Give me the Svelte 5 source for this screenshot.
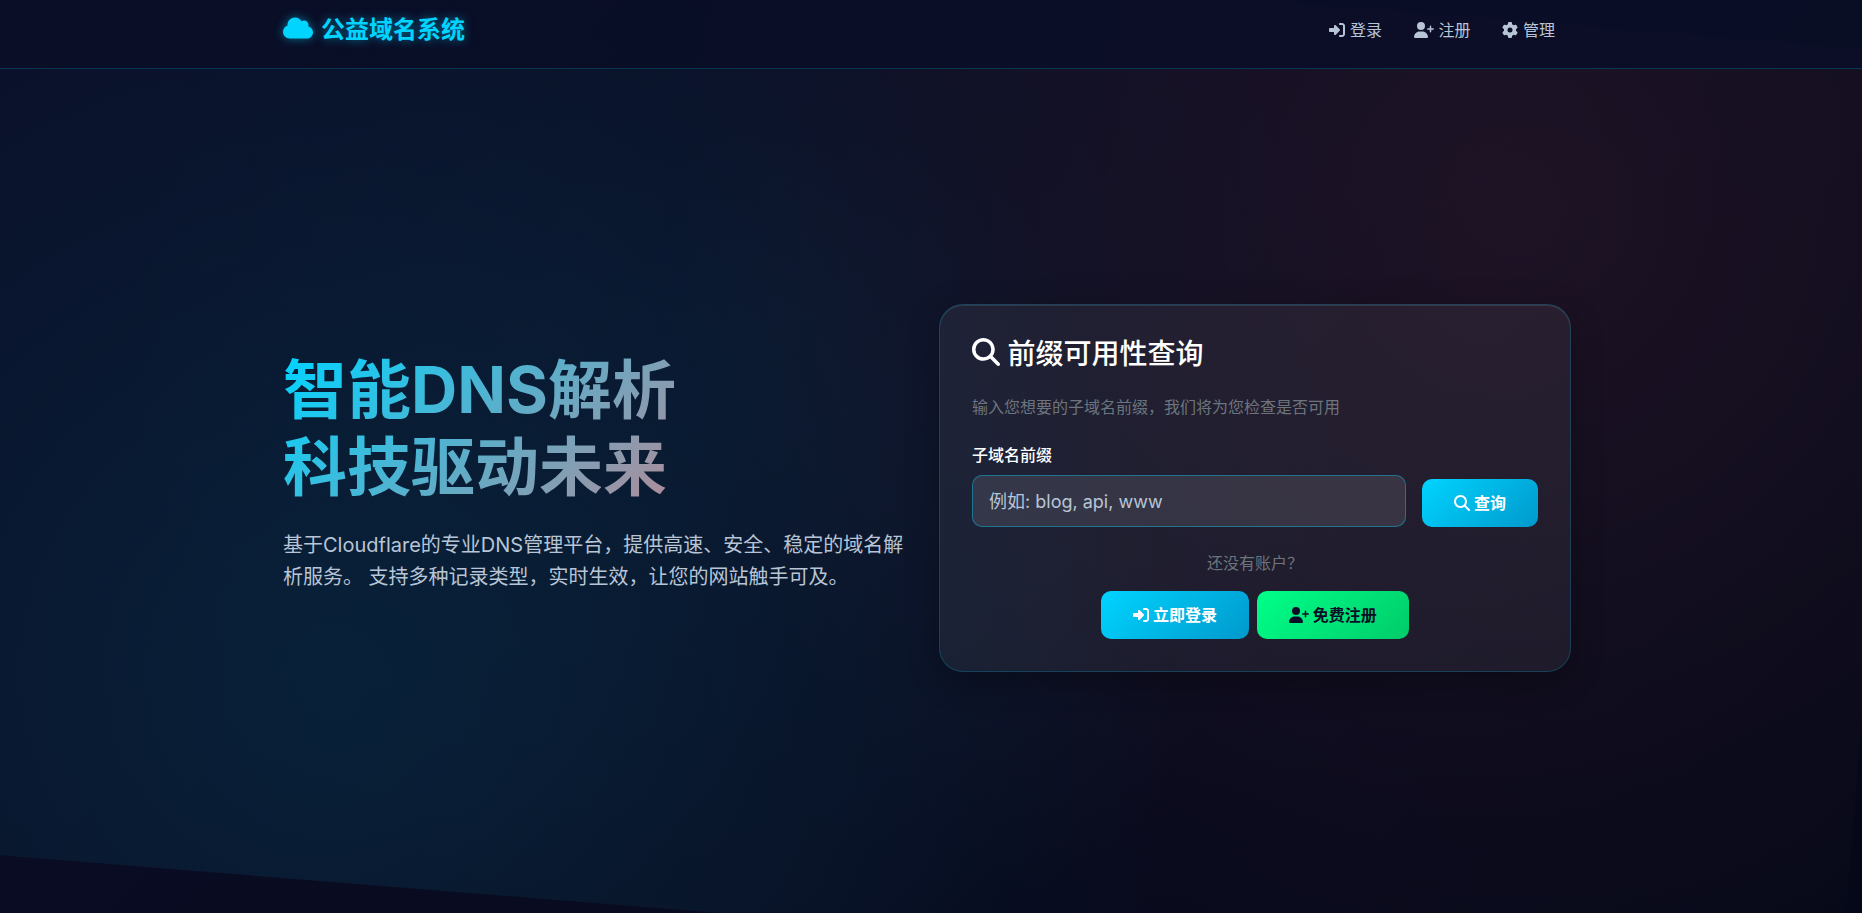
<script>
    let prefix = '';

    const navLinks = [
        { icon: 'login', label: '登录', href: '#login' },
        { icon: 'userPlus', label: '注册', href: '#register' },
        { icon: 'gear', label: '管理', href: '#admin' }
    ];

    const icons = {
        cloud: { w: 640, d: 'M0 336c0 79.5 64.5 144 144 144H512c70.7 0 128-57.3 128-128c0-61.9-44-113.6-102.4-125.4c4.1-10.7 6.4-22.4 6.4-34.6c0-53-43-96-96-96c-19.7 0-38.1 6-53.3 16.2C367 64.2 315.3 32 256 32C167.6 32 96 103.6 96 192c0 2.7 .1 5.4 .2 8.1C40.2 219.8 0 273.2 0 336z' },
        login: { w: 512, d: 'M217.9 105.9L340.7 228.7c7.2 7.2 11.3 17.1 11.3 27.3s-4.1 20.1-11.3 27.3L217.9 406.1c-6.4 6.4-15 9.9-24 9.9c-18.7 0-33.9-15.2-33.9-33.9l0-62.1L32 320c-17.7 0-32-14.3-32-32l0-64c0-17.7 14.3-32 32-32l128 0 0-62.1c0-18.7 15.2-33.9 33.9-33.9c9 0 17.6 3.6 24 9.9zM352 416l64 0c17.7 0 32-14.3 32-32l0-256c0-17.7-14.3-32-32-32l-64 0c-17.7 0-32-14.3-32-32s14.3-32 32-32l64 0c53 0 96 43 96 96l0 256c0 53-43 96-96 96l-64 0c-17.7 0-32-14.3-32-32s14.3-32 32-32z' },
        userPlus: { w: 640, d: 'M96 128a128 128 0 1 1 256 0A128 128 0 1 1 96 128zM0 482.3C0 383.8 79.8 304 178.3 304h91.4C368.2 304 448 383.8 448 482.3c0 16.4-13.3 29.7-29.7 29.7H29.7C13.3 512 0 498.7 0 482.3zM504 312V248H440c-13.3 0-24-10.7-24-24s10.7-24 24-24h64V136c0-13.3 10.7-24 24-24s24 10.7 24 24v64h64c13.3 0 24 10.7 24 24s-10.7 24-24 24H552v64c0 13.3-10.7 24-24 24s-24-10.7-24-24z' },
        gear: { w: 512, d: 'M495.9 166.6c3.2 8.7 .5 18.4-6.4 24.6l-43.3 39.4c1.1 8.3 1.7 16.8 1.7 25.4s-.6 17.1-1.7 25.4l43.3 39.4c6.9 6.2 9.6 15.9 6.4 24.6c-4.4 11.9-9.7 23.3-15.8 34.3l-4.7 8.1c-6.6 11-14 21.4-22.1 31.2c-5.9 7.2-15.7 9.6-24.5 6.8l-55.7-17.7c-13.4 10.3-28.2 18.9-44 25.4l-12.5 57.1c-2 9.1-9 16.3-18.2 17.8c-13.8 2.3-28 3.5-42.5 3.5s-28.7-1.2-42.5-3.5c-9.2-1.5-16.2-8.7-18.2-17.8l-12.5-57.1c-15.8-6.5-30.6-15.1-44-25.4L83.1 425.9c-8.8 2.8-18.6 .3-24.5-6.8c-8.1-9.8-15.5-20.2-22.1-31.2l-4.7-8.1c-6.1-11-11.4-22.4-15.8-34.3c-3.2-8.7-.5-18.4 6.4-24.6l43.3-39.4C64.6 273.1 64 264.6 64 256s.6-17.1 1.7-25.4L22.4 191.2c-6.9-6.2-9.6-15.9-6.4-24.6c4.4-11.9 9.7-23.3 15.8-34.3l4.7-8.1c6.6-11 14-21.4 22.1-31.2c5.9-7.2 15.7-9.6 24.5-6.8l55.7 17.7c13.4-10.3 28.2-18.9 44-25.4l12.5-57.1c2-9.1 9-16.3 18.2-17.8C227.3 1.2 241.5 0 256 0s28.7 1.2 42.5 3.5c9.2 1.5 16.2 8.7 18.2 17.8l12.5 57.1c15.8 6.5 30.6 15.1 44 25.4l55.7-17.7c8.8-2.8 18.6-.3 24.5 6.8c8.1 9.8 15.5 20.2 22.1 31.2l4.7 8.1c6.1 11 11.4 22.4 15.8 34.3zM256 336a80 80 0 1 0 0-160 80 80 0 1 0 0 160z' },
        search: { w: 512, d: 'M416 208c0 45.9-14.9 88.3-40 122.7L502.6 457.4c12.5 12.5 12.5 32.8 0 45.3s-32.8 12.5-45.3 0L330.7 376c-34.4 25.2-76.8 40-122.7 40C93.1 416 0 322.9 0 208S93.1 0 208 0S416 93.1 416 208zM208 352a144 144 0 1 0 0-288 144 144 0 1 0 0 288z' }
    };
</script>

{#snippet icon(name)}
    <svg class="icon" viewBox={`0 0 ${icons[name].w} 512`} style:width={`${icons[name].w / 512}em`} aria-hidden="true">
        <path d={icons[name].d} />
    </svg>
{/snippet}

<div class="page">
    <div class="glow"></div>

    <nav class="navbar">
        <div class="container nav-inner">
            <a class="brand" href="#home">{@render icon('cloud')}公益域名系统</a>
            <ul class="nav-links">
                {#each navLinks as link}
                    <li><a href={link.href}>{@render icon(link.icon)} {link.label}</a></li>
                {/each}
            </ul>
        </div>
    </nav>

    <main class="container hero">
        <section class="intro">
            <h1>智能DNS解析<br />科技驱动未来</h1>
            <p>
                基于Cloudflare的专业DNS管理平台，提供高速、安全、稳定的域名解析服务。
                支持多种记录类型，实时生效，让您的网站触手可及。
            </p>
        </section>

        <section class="card">
            <h3>{@render icon('search')} 前缀可用性查询</h3>
            <p class="muted">输入您想要的子域名前缀，我们将为您检查是否可用</p>

            <form class="query" on:submit|preventDefault={() => {}}>
                <div class="field">
                    <label for="prefix">子域名前缀</label>
                    <input id="prefix" type="text" placeholder="例如: blog, api, www" bind:value={prefix} />
                </div>
                <button class="btn primary" type="submit">{@render icon('search')} 查询</button>
            </form>

            <div class="account">
                <p class="muted">还没有账户？</p>
                <div class="account-links">
                    <a class="btn primary" href="#login">{@render icon('login')} 立即登录</a>
                    <a class="btn success" href="#register">{@render icon('userPlus')} 免费注册</a>
                </div>
            </div>
        </section>
    </main>
</div>

<style>
    :global(body) {
        background-color: #0a0e27;
    }

    .page {
        --primary: #00d4ff;
        --light: #b8c5d6;
        position: relative;
        display: flex;
        flex-direction: column;
        min-height: 100vh;
        overflow: hidden;
        color: #fff;
        font-family: Inter, "Noto Sans CJK SC", sans-serif;
        font-size: 16px;
        line-height: 24px;
        background: linear-gradient(135deg, #0a0e27 0%, #090b20 50%, #050818 100%);
    }

    .page *,
    .glow {
        box-sizing: border-box;
    }

    .glow {
        position: absolute;
        inset: -40px 0 0 -50px;
        background:
            radial-gradient(circle at 20% 80%, rgba(0, 212, 255, 0.1) 0%, transparent 50%),
            radial-gradient(circle at 80% 20%, rgba(255, 107, 107, 0.09) 0%, transparent 50%),
            radial-gradient(circle at 40% 40%, rgba(0, 212, 255, 0.03) 0%, transparent 50%);
        transform: translate(18px, 15px) rotate(4.6deg);
    }

    .icon {
        height: 1em;
        fill: currentColor;
        vertical-align: -2px;
    }

    .container {
        width: 100%;
        max-width: 1320px;
        margin: 0 auto;
        padding: 0 20px 0 12px;
    }

    .navbar {
        position: relative;
        padding: 8px 0 17px;
        background: rgba(10, 14, 39, 0.9);
        border-bottom: 1px solid rgba(0, 212, 255, 0.2);
    }

    .nav-inner {
        display: flex;
        justify-content: space-between;
        align-items: center;
    }

    .brand {
        color: var(--primary);
        font-size: 24px;
        font-weight: 700;
        line-height: 43px;
        text-decoration: none;
        text-shadow: 0 0 10px rgba(0, 212, 255, 0.5);
    }

    .brand .icon {
        margin-right: 8px;
        filter: drop-shadow(0 0 5px rgba(0, 212, 255, 0.5));
    }

    .nav-links {
        display: flex;
        margin: 0;
        padding: 0;
        list-style: none;
    }

    .nav-links a {
        padding: 8px 16px;
        color: var(--light);
        text-decoration: none;
    }

    .hero {
        position: relative;
        flex: 1;
        display: grid;
        grid-template-columns: 1fr 1fr;
        gap: 24px;
        align-items: center;
        padding-bottom: 6px;
    }

    h1 {
        margin: 0 0 24px;
        font-size: 64px;
        font-weight: 700;
        line-height: 77px;
        background: linear-gradient(135deg, var(--primary), #ff6b6b);
        background-clip: text;
        color: transparent;
    }

    .intro p {
        margin: 0 0 32px;
        color: var(--light);
        font-size: 20px;
        line-height: 32px;
    }

    .card {
        padding: 32px;
        border: 1px solid rgba(0, 212, 255, 0.2);
        border-radius: 24px;
        background: rgba(255, 255, 255, 0.06);
        box-shadow: 0 8px 32px rgba(0, 0, 0, 0.3), inset 0 1px 0 rgba(255, 255, 255, 0.1);
    }

    h3 {
        margin: 0 0 24px;
        font-size: 28px;
        font-weight: 500;
        line-height: 34px;
    }

    .muted {
        margin: 0;
        color: #6c757d;
    }

    .query {
        display: flex;
        gap: 16px;
        align-items: flex-end;
        margin-top: 24px;
    }

    .field {
        flex: 1;
        display: flex;
        flex-direction: column;
        gap: 8px;
    }

    label {
        font-weight: 500;
    }

    input {
        width: 100%;
        height: 52px;
        padding: 0 16px;
        border: 1px solid rgba(0, 212, 255, 0.4);
        border-radius: 10px;
        background: rgba(255, 255, 255, 0.1);
        color: #fff;
        font-family: inherit;
        font-size: 18px;
    }

    input::placeholder {
        color: var(--light);
        opacity: 1;
    }

    .btn {
        padding: 12px 32px;
        border: none;
        border-radius: 10px;
        font-family: inherit;
        font-size: 16px;
        font-weight: 700;
        line-height: 24px;
        text-decoration: none;
        cursor: pointer;
    }

    .primary {
        background: linear-gradient(135deg, var(--primary), #0099cc);
        color: #fff;
    }

    .success {
        background: linear-gradient(135deg, #00ff88, #00cc6a);
        color: #0a0e27;
    }

    .account {
        margin-top: 24px;
        text-align: center;
    }

    .account-links {
        display: flex;
        justify-content: center;
        gap: 8px;
        margin-top: 16px;
    }

    @media (max-width: 900px) {
        .hero {
            grid-template-columns: 1fr;
            padding-top: 32px;
            padding-bottom: 32px;
        }
    }
</style>
